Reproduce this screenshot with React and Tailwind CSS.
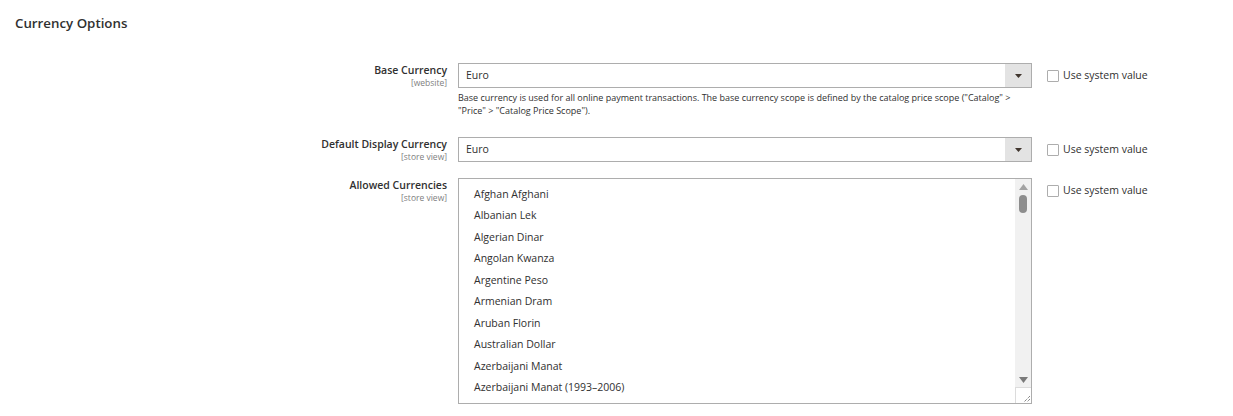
const CURRENCIES = [
  'Afghan Afghani',
  'Albanian Lek',
  'Algerian Dinar',
  'Angolan Kwanza',
  'Argentine Peso',
  'Armenian Dram',
  'Aruban Florin',
  'Australian Dollar',
  'Azerbaijani Manat',
  'Azerbaijani Manat (1993–2006)',
]

function FieldLabel({ label, scope }) {
  return (
    <div className="w-[447px] shrink-0 text-right leading-none pt-[1px]">
      <div className="text-[10.5px] font-semibold text-[#303030] leading-[13px]">{label}</div>
      <div className="text-[8.5px] text-[#808080] leading-[10px] mt-[1px]">{scope}</div>
    </div>
  )
}

function SystemValue() {
  return (
    <label className="flex items-center ml-[15px] h-[25px] text-[10.5px] text-[#303030]">
      <span className="w-[12px] h-[12px] border border-[#adadad] bg-white rounded-[1px] mr-[4px]" />
      Use system value
    </label>
  )
}

function Select({ value }) {
  return (
    <div className="flex w-[574px] h-[25px] border border-[#adadad] bg-white">
      <div className="flex-1 flex items-center pl-[7px] text-[10.5px] text-[#303030]">{value}</div>
      <div className="w-[26px] bg-[#e3e3e3] flex items-center justify-center">
        <svg width="7" height="4" viewBox="0 0 7 4">
          <path d="M0 0h7L3.5 4z" fill="#41362f" />
        </svg>
      </div>
    </div>
  )
}

function MultiSelect({ options }) {
  return (
    <div className="flex w-[574px] h-[226px] border border-[#adadad] bg-white">
      <ul className="flex-1 pl-[15px] pt-[5px]">
        {options.map(o => (
          <li key={o} className="h-[21.5px] flex items-center text-[10.5px] text-[#303030]">{o}</li>
        ))}
      </ul>
      <div className="w-[16px] bg-[#f1f1f1] flex flex-col items-center">
        <svg className="mt-[5px]" width="9" height="6" viewBox="0 0 9 6">
          <path d="M4.5 0L9 6H0z" fill="#a3a3a3" />
        </svg>
        <div className="mt-[5px] w-[8px] h-[18px] rounded-full bg-[#8d8d8d]" />
        <div className="flex-1" />
        <svg className="mb-[4px]" width="9" height="6" viewBox="0 0 9 6">
          <path d="M0 0h9L4.5 6z" fill="#7a7a7a" />
        </svg>
        <div className="w-[16px] h-[16px] border-t border-l border-[#dcdcdc] bg-white flex items-end justify-end">
          <svg width="9" height="9" viewBox="0 0 9 9">
            <path d="M8 2L2 8M8 5L5 8" stroke="#555" strokeWidth="1" strokeDasharray="1 1" />
          </svg>
        </div>
      </div>
    </div>
  )
}

export default function App() {
  return (
    <div className="w-[1233px] h-[416px] bg-white pl-[15px] pt-[14px] font-['Open_Sans',sans-serif]">
      <h2 className="text-[13.3px] font-semibold text-[#303030] leading-[18px]">Currency Options</h2>

      <div className="mt-[31px] -ml-[15px]">
        <div className="flex items-start">
          <FieldLabel label="Base Currency" scope="[website]" />
          <div className="ml-[11px]">
            <Select value="Euro" />
            <p className="w-[574px] mt-[3px] text-[9px] leading-[13px] text-[#303030]">
              Base currency is used for all online payment transactions. The base currency scope is defined by the catalog price scope ("Catalog" &gt; "Price" &gt; "Catalog Price Scope").
            </p>
          </div>
          <SystemValue />
        </div>

        <div className="flex items-start mt-[20px]">
          <FieldLabel label="Default Display Currency" scope="[store view]" />
          <div className="ml-[11px]">
            <Select value="Euro" />
          </div>
          <SystemValue />
        </div>

        <div className="flex items-start mt-[16px]">
          <FieldLabel label="Allowed Currencies" scope="[store view]" />
          <div className="ml-[11px]">
            <MultiSelect options={CURRENCIES} />
          </div>
          <SystemValue />
        </div>
      </div>
    </div>
  )
}
